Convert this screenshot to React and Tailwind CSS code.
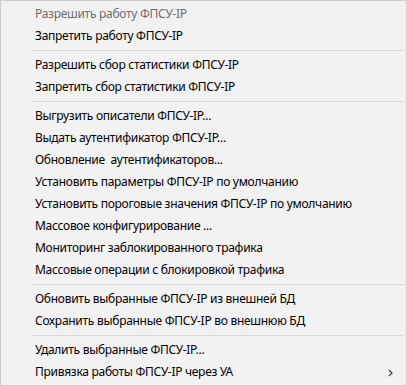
import React from "react";

const groups = [
  [
    { t: "Разрешить работу ФПСУ-IP", disabled: true },
    { t: "Запретить работу ФПСУ-IP" },
  ],
  [
    { t: "Разрешить сбор статистики ФПСУ-IP" },
    { t: "Запретить сбор статистики ФПСУ-IP" },
  ],
  [
    { t: "Выгрузить описатели ФПСУ-IP..." },
    { t: "Выдать аутентификатор ФПСУ-IP..." },
    { t: "Обновление  аутентификаторов..." },
    { t: "Установить параметры ФПСУ-IP по умолчанию" },
    { t: "Установить пороговые значения ФПСУ-IP по умолчанию" },
    { t: "Массовое конфигурирование ..." },
    { t: "Мониторинг заблокированного трафика" },
    { t: "Массовые операции с блокировкой трафика" },
  ],
  [
    { t: "Обновить выбранные ФПСУ-IP из внешней БД" },
    { t: "Сохранить выбранные ФПСУ-IP во внешнюю БД" },
  ],
  [
    { t: "Удалить выбранные ФПСУ-IP..." },
    { t: "Привязка работы ФПСУ-IP через УА", sub: true },
  ],
];

function Item({ t, disabled, sub }) {
  return (
    <div
      className={`flex h-[22px] items-center justify-between pl-[32px] pr-[11px] whitespace-pre ${
        disabled ? "text-[#6d6d6d]" : "text-black"
      }`}
    >
      <span>{t}</span>
      {sub && (
        <svg width="5" height="8" viewBox="0 0 5 8" className="mt-[1px]">
          <path d="M0.8 0.8 L4 4 L0.8 7.2" fill="none" stroke="#333" strokeWidth="1.2" />
        </svg>
      )}
    </div>
  );
}

export default function App() {
  return (
    <div
      className="w-[407px] h-[386px] bg-[#f2f2f2] border border-[#cccccc] p-[2px] text-[12px] leading-[22px] tracking-[-0.28px] overflow-hidden"
      style={{ fontFamily: '"Noto Sans", "Liberation Sans", sans-serif' }}
    >
      {groups.map((g, gi) => (
        <React.Fragment key={gi}>
          {gi > 0 && (
            <div className="h-[7px] flex items-center pl-[29px]">
              <div className="h-px w-full bg-[#d7d7d7]" />
            </div>
          )}
          {g.map((it, i) => (
            <Item key={i} {...it} />
          ))}
        </React.Fragment>
      ))}
    </div>
  );
}
